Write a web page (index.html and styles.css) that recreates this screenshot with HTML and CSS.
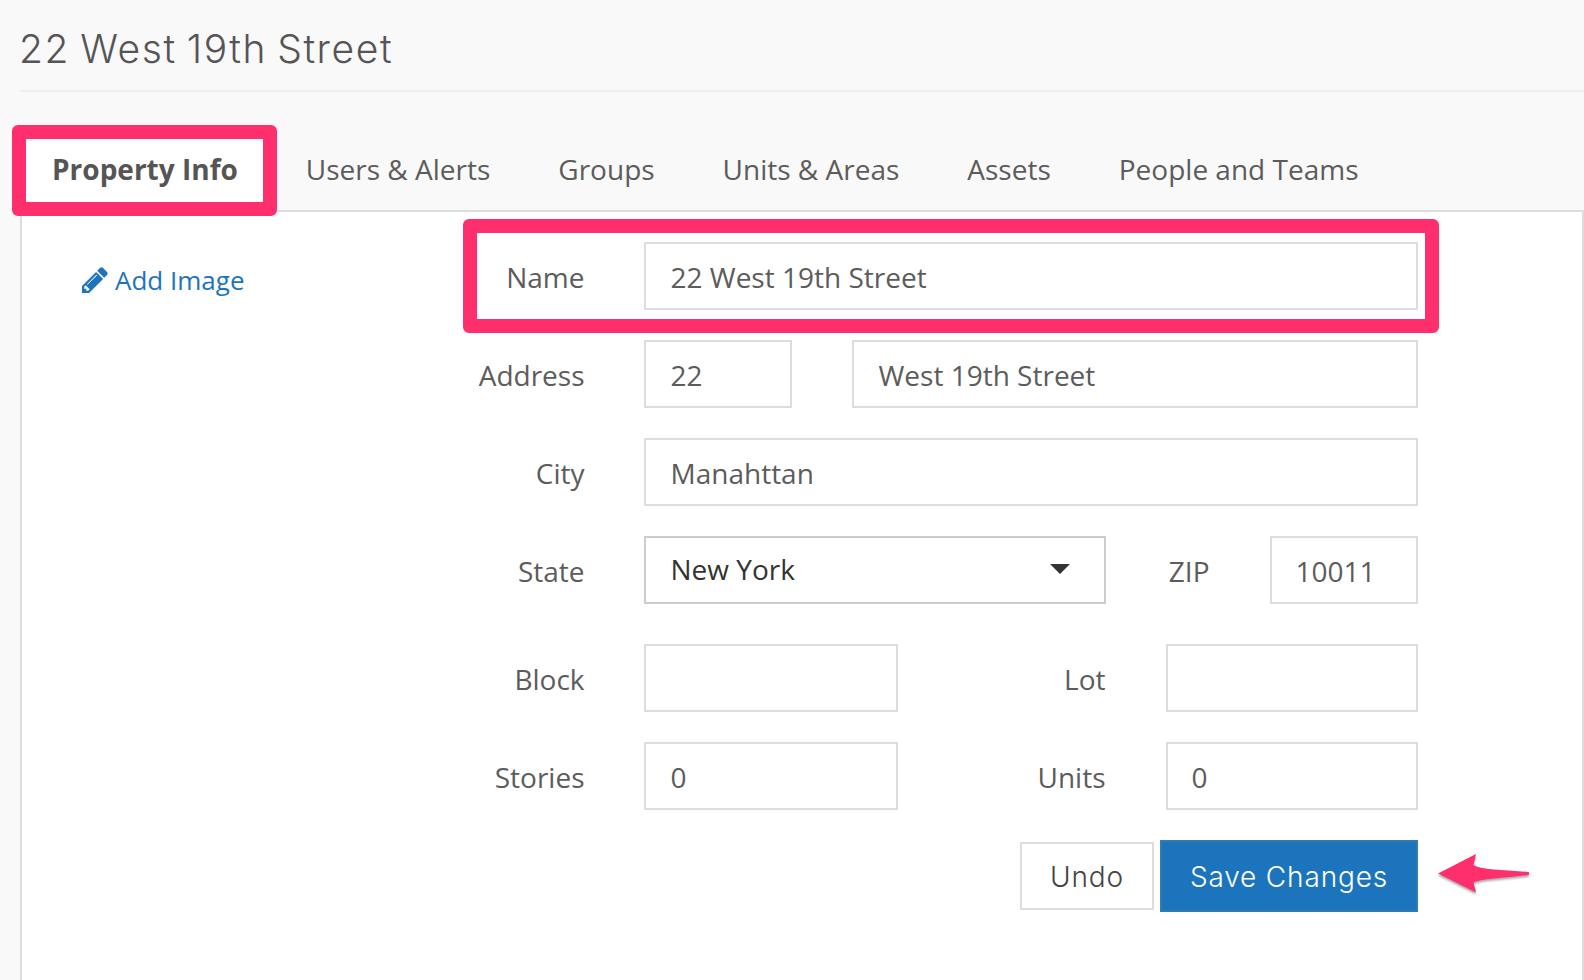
FILE: index.html
```html
<!DOCTYPE html>
<html lang="en">
<head>
<meta charset="utf-8">
<title>22 West 19th Street</title>
<link rel="stylesheet" href="styles.css">
</head>
<body>
<div class="page">
  <header class="page-header"><h1 class="title">22 West 19th Street</h1></header>
  <nav class="tabs">
    <a class="tab tab-active">Property Info</a>
    <a class="tab">Users &amp; Alerts</a>
    <a class="tab">Groups</a>
    <a class="tab">Units &amp; Areas</a>
    <a class="tab">Assets</a>
    <a class="tab">People and Teams</a>
  </nav>
  <main class="panel">
    <aside class="side">
      <a class="add-image">
        <svg class="pencil" viewBox="0 0 1536 1536"><path fill="currentColor" d="M363 1408l91-91-235-235-91 91v107h128v128h107zM886 480q0-22-22-22-10 0-17 7l-542 542q-7 7-7 17 0 22 22 22 10 0 17-7l542-542q7-7 7-17zM832 288l416 416-832 832h-416v-416zM1515 384q0 53-37 90l-166 166-416-416 166-165q36-38 90-38 53 0 91 38l235 234q37 39 37 91z"/></svg>
        <span>Add Image</span>
      </a>
    </aside>
    <form class="form">
      <div class="row"><label class="label">Name</label><input class="field grow" value="22 West 19th Street"></div>
      <div class="row"><label class="label">Address</label><input class="field small" value="22"><input class="field grow street" value="West 19th Street"></div>
      <div class="row"><label class="label">City</label><input class="field grow" value="Manahttan"></div>
      <div class="row row-state"><label class="label">State</label><div class="select"><span>New York</span><i class="caret"></i></div><label class="label label-zip">ZIP</label><input class="field small field-zip" value="10011"></div>
      <div class="row"><label class="label">Block</label><input class="field medium"><label class="label label-second">Lot</label><input class="field grow"></div>
      <div class="row"><label class="label">Stories</label><input class="field medium" value="0"><label class="label label-second">Units</label><input class="field grow field-units" value="0"></div>
      <div class="actions"><button type="button" class="btn">Undo</button><button type="button" class="btn btn-primary">Save Changes</button></div>
    </form>
  </main>
  <div class="mark mark-tab"></div>
  <div class="mark mark-name"></div>
  <svg class="arrow" viewBox="0 0 104 52"><path fill="#ff2f6d" d="M4 25.500L42 6L39.500 17Q44 20 60 21.500Q78 22.500 94.500 24Q96 25.500 94.500 27Q78 28.500 60 30.500Q44 32 39.500 34.500L42 44.500Z"/></svg>
</div>
</body>
</html>
```

FILE: styles.css
```css
* { box-sizing: border-box; }
body { margin: 0; background: #f9f9f9; color: #58595b; font: 28px/38px "Open Sans", "Noto Sans", sans-serif; overflow: hidden; }
.page { position: relative; height: 980px; padding-left: 20px; display: flex; flex-direction: column; overflow: hidden; }
.page-header { height: 92px; border-bottom: 2px solid #eee; padding-top: 24px; flex: none; }
.title { margin: 0 0 0 -1px; font: 300 39px/50px Inter, sans-serif; letter-spacing: 1.6px; word-spacing: -2.500px; color: #555; white-space: nowrap; }
.tabs { display: flex; gap: 4px; height: 118px; padding-top: 36px; flex: none; }
.tab { padding: 20px 30px 0; border: 2px solid transparent; border-bottom: 0; height: 84px; color: #5c5c5c; white-space: nowrap; }
.tab-active { background: #fff; border-color: #ddd; font-weight: 700; color: #555; height: 84px; position: relative; z-index: 1; }
.panel { height: 800px; flex: none; background: #fff; border: 2px solid #ddd; display: flex; padding-top: 30px; }
.side { width: 440px; padding: 20px 0 0 60px; flex: none; }
.add-image { display: flex; align-items: center; gap: 7px; color: #1c75bc; font-size: 26px; line-height: 36px; }
.pencil { width: 26px; height: 26px; }
.form { width: 956px; flex: none; }
.row { display: flex; height: 68px; margin-bottom: 30px; }
.row-state { margin-bottom: 40px; }
.label { width: 122.500px; margin-right: 59.500px; padding-top: 16px; text-align: right; color: #5c5c5c; flex: none; }
.field { height: 68px; min-width: 0; margin: 0; padding: 2px 24.500px 0; border: 2px solid #ddd; border-radius: 0; background: #fff; color: #5c5c5c; font: inherit; outline: 0; }
.grow { flex: 1; }
.small { width: 148px; flex: none; }
.medium { width: 254px; flex: none; }
.street { margin-left: 60px; }
.field-units, .field-zip { padding-left: 23.500px; }
.select { width: 462px; border: 2px solid #ccc; padding: 12px 34px 0 24.500px; color: #333; display: flex; justify-content: space-between; flex: none; }
.caret { border: 10px solid transparent; border-top-color: #333; border-bottom: 0; height: 10px; margin-top: 14px; }
.label-zip { width: 103.500px; margin-right: 60.500px; }
.label-second { width: 207.500px; margin-right: 60.500px; }
.actions { display: flex; justify-content: flex-end; align-items: center; gap: 6px; height: 72px; }
.btn { width: 134px; height: 68px; padding: 1px 0 0; border: 2px solid #ddd; background: #fff; color: #444; font: 300 28px/38px Inter, sans-serif; letter-spacing: 0.85px; white-space: nowrap; }
.btn-primary { width: 258px; height: 72px; background: #1c75bc; border-color: #2f7cb2; color: #fff; }
.mark { position: absolute; border: 14px solid #ff2f6d; border-radius: 6px; z-index: 2; }
.mark-tab { left: 12px; top: 125px; width: 265px; height: 91px; }
.mark-name { left: 463px; top: 218.500px; width: 976px; height: 114.500px; }
.arrow { position: absolute; left: 1434px; top: 848px; width: 104px; height: 52px; filter: drop-shadow(0 2px 1px rgba(0,0,0,.35)); }
```
